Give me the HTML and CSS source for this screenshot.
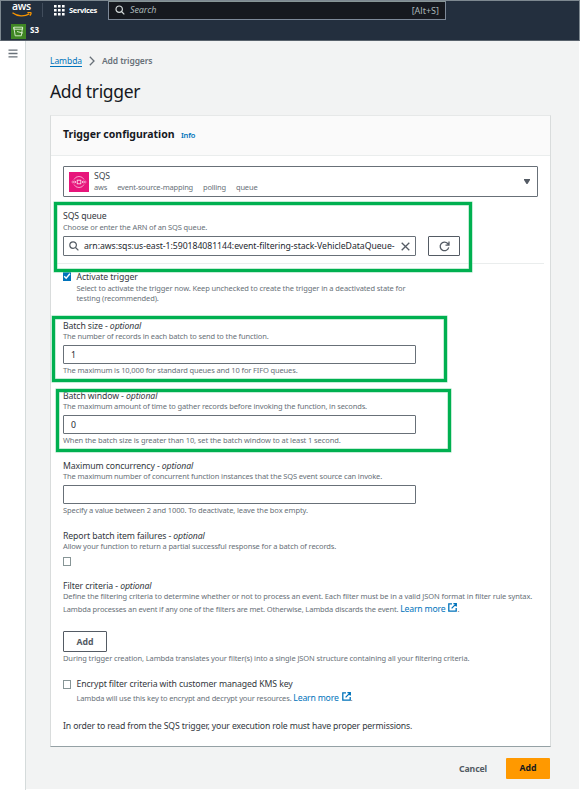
FILE: index.html
```html
<!DOCTYPE html>
<html lang="en">
<head>
<meta charset="utf-8">
<title>Add trigger</title>
<link rel="stylesheet" href="styles.css">
</head>
<body>
<div class="app">
  <header class="topbar">
    <div class="nav">
      <div class="logo">
        <span class="logo-text">aws</span>
        <svg class="smile" width="20" height="5" viewBox="0 0 20 5" fill="none" stroke="#f79400" stroke-width="1.3"><path d="M.5 .7C5.5 4.6 12.500 4.700 17.300 1.900M15.400 .7c1.800-.4 3.200-.3 3.500 0s-.1 1.800-1 3"/></svg>
      </div>
      <span class="nav-sep"></span>
      <svg class="grid-icon" width="11" height="11" viewBox="0 0 11 11" fill="#fff"><path d="M0 0h2.600v2.600H0zM4 0h2.600v2.600H4zM8 0h2.600v2.600H8zM0 4h2.600v2.600H0zM4 4h2.600v2.600H4zM8 4h2.600v2.600H8zM0 8h2.600v2.600H0zM4 8h2.600v2.600H4zM8 8h2.600v2.600H8z"/></svg>
      <span class="services">Services</span>
      <div class="search">
        <svg width="10" height="10" viewBox="0 0 10 10" fill="none" stroke="#d5dbdb" stroke-width="1.200"><circle cx="4.200" cy="4.200" r="3.200"/><path d="M6.500 6.500L9.300 9.300"/></svg>
        <span class="search-text">Search</span>
        <span class="search-key">[Alt+S]</span>
      </div>
    </div>
    <div class="favorites">
      <svg width="15" height="15" viewBox="0 0 15 15"><rect width="15" height="15" fill="#3f8624"/><g fill="none" stroke="#dcefd3" stroke-width=".9"><path d="M2.800 3.200h8.800l-1.300 8.600H4.200zM2.800 3.200v2h8.800v-2M6 7.500l6 1.600"/></g></svg>
      <span>S3</span>
    </div>
  </header>
  <div class="body">
    <aside class="side">
      <svg width="10" height="9" viewBox="0 0 10 9" stroke="#687078" stroke-width="1.300"><path d="M.5 1.200h9M.5 4.500h9M.5 7.800h9"/></svg>
    </aside>
    <main class="main">
      <nav class="crumbs">
        <a class="crumb-link">Lambda</a>
        <svg width="6" height="10" viewBox="0 0 6 10" fill="none" stroke="#687078" stroke-width="1.300"><path d="M.8 .8L5 5L.8 9.200"/></svg>
        <span class="crumb-current">Add triggers</span>
      </nav>
      <h1>Add trigger</h1>
      <section class="card">
        <div class="card-head"><h2>Trigger configuration</h2><a class="info">Info</a></div>
        <div class="card-body">
          <div class="select">
            <svg width="20" height="20" viewBox="0 0 20 20"><rect width="20" height="20" fill="#e7157b"/><g fill="none" stroke="#fff" stroke-opacity=".85" stroke-width=".7"><path d="M5 7.500a5.600 5.600 0 0 1 10 0M5 12.500a5.600 5.600 0 0 0 10 0"/><rect x="8.200" y="8.200" width="3.600" height="3.600" stroke-width=".9"/><path d="M4.500 10h2.300M5.700 8.700L7 10l-1.300 1.300M15.500 10h-2.300M14.300 8.700L13 10l1.300 1.300"/><circle cx="3.900" cy="10" r="1" stroke-width=".5"/><circle cx="16.100" cy="10" r="1" stroke-width=".5"/></g></svg>
            <div class="select-text">
              <div class="select-name">SQS</div>
              <div class="tags"><span>aws</span><span>event-source-mapping</span><span>polling</span><span>queue</span></div>
            </div>
            <svg class="caret" width="6" height="5" viewBox="0 0 6 5" fill="#545b64"><path d="M0 0h6v1L3.500 5h-1L0 1z"/></svg>
          </div>

          <div class="field queue">
            <div class="label">SQS queue</div>
            <div class="hint">Choose or enter the ARN of an SQS queue.</div>
            <div class="queue-row">
              <div class="input arn">
                <svg width="10" height="10" viewBox="0 0 10 10" fill="none" stroke="#545b64" stroke-width="1.200"><circle cx="4.100" cy="4.100" r="3.300"/><path d="M6.500 6.500L9.400 9.400"/></svg>
                <span class="arn-text">arn:aws:sqs:us-east-1:590184081144:event-filtering-stack-VehicleDataQueue-</span>
                <svg width="9" height="9" viewBox="0 0 9 9" stroke="#545b64" stroke-width="1.300"><path d="M.7 .7l7.600 7.600M8.300 .7L.7 8.300"/></svg>
              </div>
              <div class="refresh">
                <svg width="11" height="11" viewBox="0 0 11 11" fill="none" stroke="#545b64" stroke-width="1.300"><path d="M9.700 6.300A4.300 4.300 0 1 1 8.700 2.500L9.800 3.900M10 .5v3.600H6.500"/></svg>
              </div>
            </div>
            <div class="mark mark-queue"></div>
          </div>

          <div class="divider"></div>

          <div class="check-row activate">
            <span class="box checked"><svg width="8" height="8" viewBox="0 0 8 8" fill="none" stroke="#fff" stroke-width="1.400"><path d="M1.200 4.200L3.200 6.200L6.900 1.800"/></svg></span>
            <div>
              <div class="label">Activate trigger</div>
              <div class="hint wide">Select to activate the trigger now. Keep unchecked to create the trigger in a deactivated state for<br>testing (recommended).</div>
            </div>
          </div>

          <div class="field size">
            <div class="label">Batch size - <i>optional</i></div>
            <div class="hint">The number of records in each batch to send to the function.</div>
            <div class="input">1</div>
            <div class="hint">The maximum is 10,000 for standard queues and 10 for FIFO queues.</div>
            <div class="mark mark-size"></div>
          </div>

          <div class="field">
            <div class="label">Batch window - <i>optional</i></div>
            <div class="hint">The maximum amount of time to gather records before invoking the function, in seconds.</div>
            <div class="input">0</div>
            <div class="hint wide">When the batch size is greater than 10, set the batch window to at least 1 second.</div>
            <div class="mark mark-window"></div>
          </div>

          <div class="field">
            <div class="label">Maximum concurrency - <i>optional</i></div>
            <div class="hint">The maximum number of concurrent function instances that the SQS event source can invoke.</div>
            <div class="input"></div>
            <div class="hint wide">Specify a value between 2 and 1000. To deactivate, leave the box empty.</div>
          </div>

          <div class="field report">
            <div class="label">Report batch item failures - <i>optional</i></div>
            <div class="hint">Allow your function to return a partial successful response for a batch of records.</div>
            <span class="box"></span>
          </div>

          <div class="field filter">
            <div class="label">Filter criteria - <i>optional</i></div>
            <div class="hint wide">Define the filtering criteria to determine whether or not to process an event. Each filter must be in a valid JSON format in filter rule syntax.</div>
            <div class="hint linked">Lambda processes an event if any one of the filters are met. Otherwise, Lambda discards the event. <a class="more">Learn more</a><svg class="ext" width="9" height="9" viewBox="0 0 9 9" fill="none" stroke="#0073bb" stroke-width="1.300"><path d="M4 .8H.8v7.400h7.400V5M5.400 .7h2.900v2.900M8.100 .9L3.600 5.400"/></svg>.</div>
            <div class="add-small">Add</div>
            <div class="hint wide">During trigger creation, Lambda translates your filter(s) into a single JSON structure containing all your filtering criteria.</div>
          </div>

          <div class="check-row encrypt">
            <span class="box"></span>
            <div>
              <div class="label">Encrypt filter criteria with customer managed KMS key</div>
              <div class="hint linked">Lambda will use this key to encrypt and decrypt your resources. <a class="more">Learn more</a><svg class="ext" width="9" height="9" viewBox="0 0 9 9" fill="none" stroke="#0073bb" stroke-width="1.300"><path d="M4 .8H.8v7.400h7.400V5M5.400 .7h2.900v2.900M8.100 .9L3.600 5.400"/></svg>.</div>
            </div>
          </div>

          <p class="note">In order to read from the SQS trigger, your execution role must have proper permissions.</p>
        </div>
      </section>
      <div class="actions"><span class="cancel">Cancel</span><span class="submit">Add</span></div>
    </main>
  </div>
</div>
</body>
</html>
```
FILE: styles.css
```css
* { box-sizing: border-box; }
body { margin: 0; background: #fff; font-family: "Noto Sans", sans-serif; color: #16191f; }
.app { width: 580px; height: 790px; overflow: hidden; display: flex; flex-direction: column; white-space: nowrap; }

.topbar { height: 41px; flex: none; background: #232f3e; border: 1px solid #7d8890; border-bottom-color: #58616b; color: #fff; }
.nav { height: 18px; display: flex; align-items: center; }
.logo { width: 41px; padding-left: 11px; height: 18px; }
.logo-text { display: block; font: 600 10.500px/11px "Open Sans", sans-serif; letter-spacing: -.3px; }
.smile { display: block; margin-top: 0; }
.nav-sep { width: 1px; height: 14px; background: #414d5c; margin-right: 11px; }
.grid-icon { margin-right: 4px; }
.services { width: 39px; font-size: 7.500px; line-height: 10px; padding-bottom: 1px; font-weight: 700; letter-spacing: -.32px; }
.search { width: 338px; height: 19px; background: #16191f; border: 1px solid #7d8998; border-top-color: #879596; display: flex; align-items: center; padding: 0 6px 0 6px; color: #aab7b8; }
.search-text { flex: 1; margin-left: 5px; line-height: 12px; padding-bottom: 1px; font-size: 9px; font-style: italic; letter-spacing: -.1px; }
.search-key { font-size: 9px; }
.favorites { height: 20px; display: flex; align-items: center; gap: 4px; padding-left: 10px; margin-top: 2px; font-size: 8px; font-weight: 700; }
.favorites span { line-height: 12px; padding-bottom: 2px; }

.body { flex: 1; display: flex; }
.side { width: 26px; background: #fff; border-right: 1px solid #d5dbdb; padding: 8px 0 0 8px; }
.side svg { display: block; }
.main { width: 553px; height: 748px; background: #f2f3f3; padding: 13px 0 0 24px; }

.crumbs { display: flex; align-items: center; height: 14px; font-size: 8.500px; line-height: 12px; }
.crumb-link { color: #0073bb; border-bottom: 1px solid #0073bb; letter-spacing: -.06px; width: 32px; height: 12px; margin-right: 7px; }
.crumb-current { margin-left: 7px; color: #687078; font-weight: 600; letter-spacing: -.1px; }
h1 { margin: 10px 0 0; font-size: 17.500px; line-height: 26px; height: 37px; font-weight: 400; letter-spacing: -.35px; }

.card { width: 501px; height: 632px; background: #fff; border: 1px solid #d9dcdc; border-top-color: #e6e8e8; border-bottom-color: #95a1a5; }
.card-head { height: 40px; background: #fafafa; border-bottom: 1px solid #eaeded; padding: 0 12px 3px; display: flex; align-items: center; }
h2 { margin: 0; width: 118px; font-size: 10.500px; line-height: 14px; font-weight: 700; }
.info { color: #0073bb; font-size: 7.500px; font-weight: 600; letter-spacing: -.2px; line-height: 10px; padding-top: 2px; }
.card-body { padding: 10px 12px 0; }

.select { width: 475px; height: 31px; border: 1px solid #687078; border-radius: 1px; display: flex; align-items: center; padding: 0 7px 0 5px; }
.select-text { flex: 1; margin-left: 5px; }
.select-name { font-size: 8.700px; line-height: 11px; letter-spacing: -.1px; color: #414750; }
.tags { display: flex; gap: 10px; font-size: 7.500px; line-height: 10px; letter-spacing: -.18px; color: #687078; }

.field { position: relative; height: 70px; }
.label { font-size: 8.700px; line-height: 11px; letter-spacing: -.1px; color: #333840; }
.field:not(.queue) .label, .activate .label { height: 10px; }
.hint { font-size: 7.500px; line-height: 10px; letter-spacing: -.135px; color: #687078; }
.hint.wide { letter-spacing: -.105px; }
.input { width: 353px; height: 19px; margin: 4px 0 1px; border: 1px solid #687078; border-radius: 1px; padding-left: 7px; font-size: 8.700px; line-height: 18px; color: #25292f; }
.queue { height: 52px; margin-top: 14px; padding-bottom: 1px; }
.queue-row { display: flex; gap: 12px; }
.arn { height: 20px; display: flex; align-items: center; padding: 0 5px; }
.arn-text { flex: 1; margin-left: 5px; letter-spacing: -.047px; }
.refresh { width: 32px; height: 20px; margin-top: 4px; border: 1px solid #545b64; border-radius: 1px; display: flex; align-items: center; justify-content: center; }
.divider { height: 1px; margin: 0 -6px 0 -6px; background: #eaeded; }

.mark { position: absolute; border: 3px solid #00b050; box-shadow: 0 0 0 .5px #8adbae, inset 0 0 0 .5px #8adbae; }
.mark-queue { left: -9px; top: -9px; width: 418px; height: 70px; }
.mark-size { left: -11px; top: -5px; width: 395px; height: 66px; }
.mark-window { left: -7px; top: -2px; width: 395px; height: 63px; }

.check-row { display: flex; }
.box { display: block; flex: none; width: 8px; height: 9px; border: 1px solid #879596; }
.check-row .box { margin-right: 5.500px; }
.box.checked { background: #0073bb; border: 0; }
.box.checked svg { display: block; }
.activate { margin-top: 8px; height: 49px; }
.activate .hint { padding-top: 1px; }
.report { height: 50px; }
.report .box { margin-top: 6px; }
.filter { height: 98px; }
.linked { line-height: 14px; height: 14px; margin-top: 1px; }
.more { color: #0073bb; font-size: 8.700px; letter-spacing: -.2px; }
.ext { margin-left: 3px; }
.add-small { width: 44px; height: 21px; margin: 15px 0 1px; border: 1px solid #545b64; border-radius: 1px; text-align: center; font-size: 8.700px; line-height: 20px; font-weight: 700; color: #545b64; }
.encrypt { height: 42px; }
.encrypt .box { margin-top: 1px; }
.note { margin: 0; font-size: 8.700px; line-height: 11px; letter-spacing: -.145px; color: #333840; }

.actions { width: 501px; height: 21px; margin-top: 11px; display: flex; justify-content: flex-end; align-items: center; font-size: 8.700px; font-weight: 700; }
.cancel { width: 47px; color: #545b64; letter-spacing: -.1px; }
.submit { width: 44px; height: 21px; margin-right: 1px; background: #ff9900; border-radius: 1px; text-align: center; line-height: 21px; color: #16191f; }
```
